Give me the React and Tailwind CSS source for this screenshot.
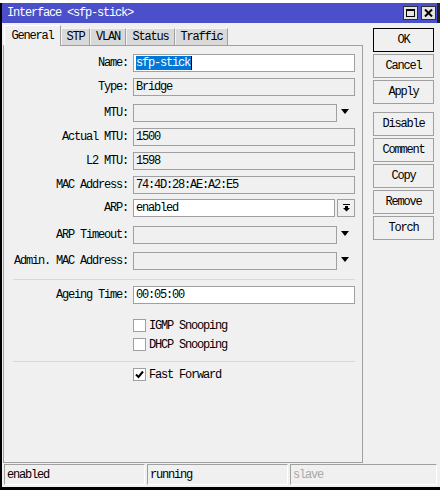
import React from "react";

const font = "font-['Liberation_Mono',monospace] text-[12px] tracking-[-1.2px] leading-none text-black";

function Tri() {
  return (
    <svg width="8" height="5" viewBox="0 0 8 5" className="ml-[4px] self-start mt-[5px]">
      <polygon points="0,0 8,0 4,5" fill="#000" />
    </svg>
  );
}

function Row({ label, mt, children }) {
  return (
    <div className={`flex items-center h-[18px] ${mt}`}>
      <div className="w-[124px] text-right whitespace-nowrap">{label}</div>
      <div className="ml-[5px] flex items-center h-[18px]">{children}</div>
    </div>
  );
}

function Box({ w, white, children }) {
  return (
    <div
      className={`${w} h-[18px] border border-[#a0a0a0] ${white ? "bg-white" : "bg-[#f0f0f0]"} pl-[2px] flex items-center whitespace-nowrap`}
    >
      {children}
    </div>
  );
}

function Check({ mt, checked, label }) {
  return (
    <div className={`flex items-center h-[13px] ${mt}`}>
      <div className="ml-[129px] w-[13px] h-[13px] border border-[#a0a0a0] bg-white flex items-center justify-center">
        {checked && (
          <svg width="9" height="9" viewBox="0 0 9 9">
            <path d="M1 4.5 L3.5 7 L8 1.5" stroke="#000" strokeWidth="2" fill="none" />
          </svg>
        )}
      </div>
      <div className="ml-[3px] whitespace-nowrap">{label}</div>
    </div>
  );
}

function Btn({ mt, label, def }) {
  return (
    <div
      className={`${mt} w-[61px] h-[24px] flex items-center justify-center bg-[#f0f0f0] border ${def ? "border-black" : "border-[#a0a0a0]"}`}
    >
      {label}
    </div>
  );
}

function Tab({ w, label, active }) {
  if (active) {
    return (
      <div
        className={`${w} h-[21px] mb-[-1px] relative z-10 bg-[#f0f0f0] border-t border-l border-white border-r border-r-[#a0a0a0] flex items-center justify-center`}
      >
        <span className="mt-[-1px]">{label}</span>
      </div>
    );
  }
  return (
    <div
      className={`${w} h-[17px] self-end bg-[#d9d9d9] border-t border-l border-[#f4f4f4] border-r border-r-[#a0a0a0] flex items-center justify-center`}
    >
      {label}
    </div>
  );
}

export default function App() {
  return (
    <div className={`w-[440px] h-[490px] bg-white overflow-hidden ${font}`}>
      <div className="h-[3px] bg-white" />
      <div className="h-[487px] border-l-2 border-black bg-[#f0f0f0] flex flex-col">
        {/* title bar */}
        <div className="h-[20px] flex items-stretch">
          <div className="flex-1 bg-[#4b4fc9] flex items-center pl-[5px] text-white">
            <span className="text-white">Interface &lt;sfp-stick&gt;</span>
            <div className="ml-auto flex items-center gap-[3px] mr-[1px]">
              <div className="w-[15px] h-[14px] bg-[#e4e4e4] border border-[#303030] flex items-center justify-center">
                <div className="w-[9px] h-[8px] border border-black border-t-2" />
              </div>
              <div className="w-[15px] h-[14px] bg-[#e4e4e4] border border-[#303030] flex items-center justify-center">
                <svg width="9" height="8" viewBox="0 0 9 8">
                  <path d="M1 0.5 L8 7.5 M8 0.5 L1 7.5" stroke="#000" strokeWidth="2" />
                </svg>
              </div>
            </div>
          </div>
          <div className="w-[3px] bg-[#202020]" />
        </div>

        <div className="flex">
          {/* left column */}
          <div className="w-[361px] flex flex-col">
            <div className="mt-[2px] ml-[2px] h-[20px] flex">
              <Tab w="w-[57px]" label="General" active />
              <Tab w="w-[29px]" label="STP" />
              <Tab w="w-[36px]" label="VLAN" />
              <Tab w="w-[49px]" label="Status" />
              <Tab w="w-[53px]" label="Traffic" />
            </div>
            <div className="ml-[1px] w-[360px] h-[418px] border border-[#a0a0a0] flex flex-col">
              <Row label="Name:" mt="mt-[8px]">
                <Box w="w-[222px]" white>
                  <span className="bg-[#0078d7] text-white h-[14px] flex items-center pr-[1px]">sfp-stick</span>
                  <span className="w-px h-[14px] bg-black" />
                </Box>
              </Row>
              <Row label="Type:" mt="mt-[6px]">
                <Box w="w-[222px]">Bridge</Box>
              </Row>
              <Row label="MTU:" mt="mt-[8px]">
                <Box w="w-[204px]" />
                <Tri />
              </Row>
              <Row label="Actual MTU:" mt="mt-[6px]">
                <Box w="w-[222px]">1500</Box>
              </Row>
              <Row label="L2 MTU:" mt="mt-[6px]">
                <Box w="w-[222px]">1598</Box>
              </Row>
              <Row label="MAC Address:" mt="mt-[6px]">
                <Box w="w-[222px]">74:4D:28:AE:A2:E5</Box>
              </Row>
              <Row label="ARP:" mt="mt-[5px]">
                <Box w="w-[202px]" white>enabled</Box>
                <div className="ml-[2px] w-[18px] h-[18px] border border-[#a0a0a0] flex items-center justify-center">
                  <svg width="7" height="8" viewBox="0 0 7 8">
                    <rect x="0" y="0" width="7" height="1" fill="#000" />
                    <rect x="2" y="2" width="3" height="3" fill="#000" />
                    <polygon points="0,4 7,4 3.5,7.5" fill="#000" />
                  </svg>
                </div>
              </Row>
              <Row label="ARP Timeout:" mt="mt-[9px]">
                <Box w="w-[204px]" />
                <Tri />
              </Row>
              <Row label="Admin. MAC Address:" mt="mt-[8px]">
                <Box w="w-[204px]" />
                <Tri />
              </Row>
              <div className="mt-[9px] ml-[9px] w-[342px] h-px bg-[#d8d8d8]" />
              <Row label="Ageing Time:" mt="mt-[6px]">
                <Box w="w-[222px]" white>00:05:00</Box>
              </Row>
              <Check mt="mt-[15px]" label="IGMP Snooping" />
              <Check mt="mt-[6px]" label="DHCP Snooping" />
              <div className="mt-[10px] ml-[9px] w-[342px] h-px bg-[#d8d8d8]" />
              <Check mt="mt-[6px]" checked label="Fast Forward" />
            </div>
          </div>
          {/* right column */}
          <div className="flex flex-col ml-[10px]">
            <Btn mt="mt-[5px]" label="OK" def />
            <Btn mt="mt-[2px]" label="Cancel" />
            <Btn mt="mt-[2px]" label="Apply" />
            <Btn mt="mt-[8px]" label="Disable" />
            <Btn mt="mt-[2px]" label="Comment" />
            <Btn mt="mt-[2px]" label="Copy" />
            <Btn mt="mt-[2px]" label="Remove" />
            <Btn mt="mt-[2px]" label="Torch" />
          </div>
        </div>

        {/* status bar */}
        <div className="mt-[1px] ml-[2px] flex gap-[2px]">
          <div className="w-[141px] h-[21px] border-t border-l border-[#a0a0a0] border-b border-r border-b-white border-r-white flex items-center pl-[2px]">
            enabled
          </div>
          <div className="w-[141px] h-[21px] border-t border-l border-[#a0a0a0] border-b border-r border-b-white border-r-white flex items-center pl-[2px]">
            running
          </div>
          <div className="w-[147px] h-[21px] border-t border-l border-[#a0a0a0] border-b border-r border-b-white border-r-white flex items-center pl-[2px] text-[#a8a8a8]">
            slave
          </div>
        </div>
        <div className="flex-1" />
        <div className="h-[3px] bg-black" />
      </div>
    </div>
  );
}
